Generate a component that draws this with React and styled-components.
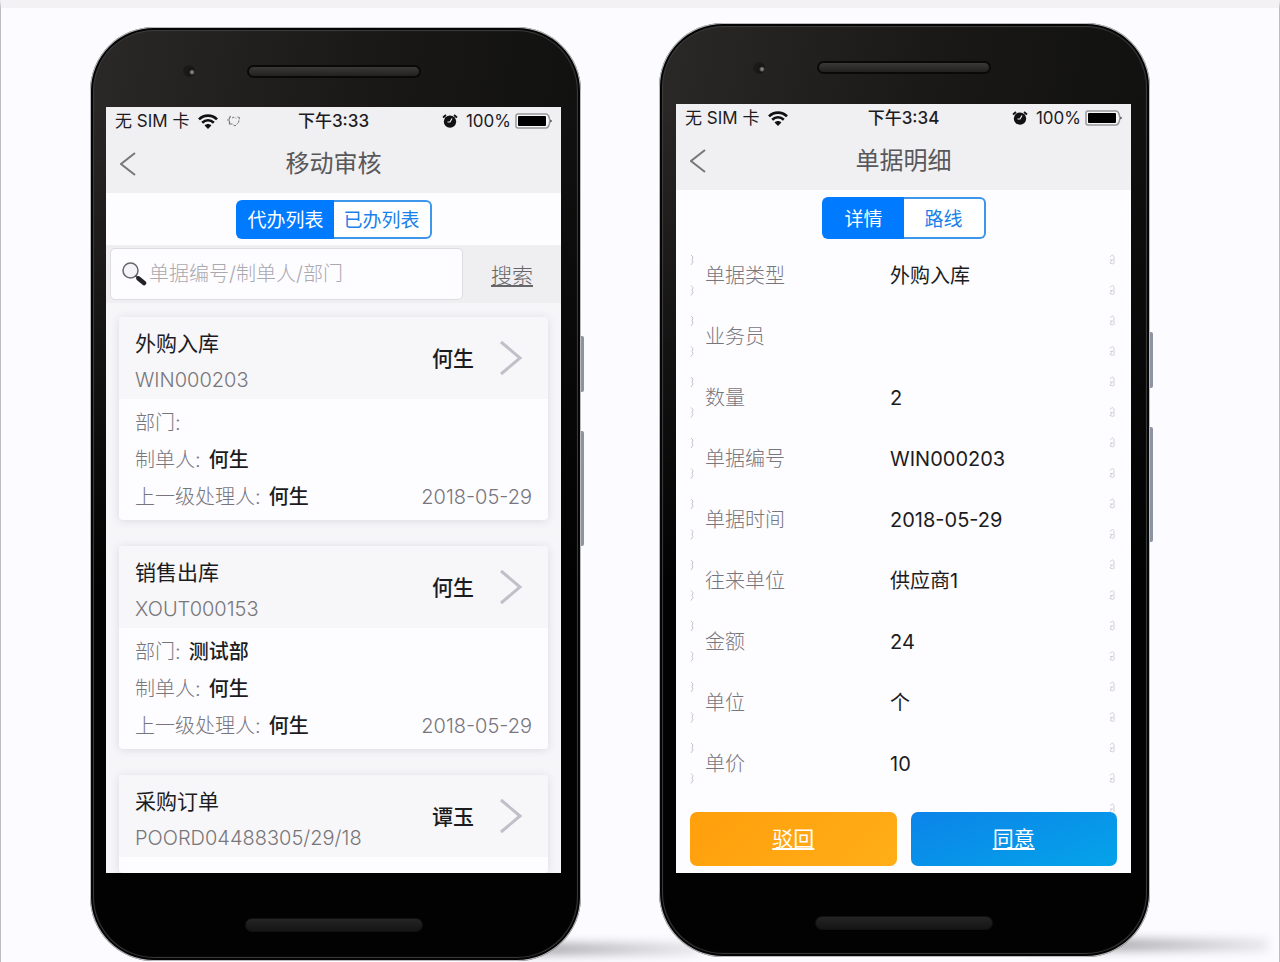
import React, { useState } from "react";
import styled, { createGlobalStyle } from "styled-components";

const GlobalStyle = createGlobalStyle`
  * {
    box-sizing: border-box;
  }

  body {
    margin: 0;
    background: #fcfbff;
    color: #1c1c1e;
    font-family: Inter, "Noto Sans CJK SC", sans-serif;
    font-size: 20px;
  }

  button, input {
    font-family: inherit;
  }
`;

const Page = styled.main`
  display: grid;
  grid-template-columns: repeat(2, minmax(0, 1fr));
  align-items: start;
  gap: 78px;
  min-height: 100vh;
  padding: 15px 129px 0 89px;
  border: 1px solid #bcbcc2;
  border-top: 8px solid #f3f1f4;
  border-bottom: 0;
  overflow: hidden;
`;

const Phone = styled.section`
  position: relative;
  display: flex;
  flex-direction: column;
  margin-top: ${(props) => (props.$lowered ? "4px" : "0")};
  padding: ${(props) => (props.$lowered ? "0 20px 0 16px" : "0 19px 0 17px")};
  border-radius: 64px;
  background: linear-gradient(rgba(0, 0, 0, 0) 80px, #020202 560px),
    linear-gradient(100deg, #2b2928 0%, #191817 45%, #0c0c0c 100%);
  box-shadow: inset 0 0 0 1px #b9bcbd, inset 0 0 0 3px #050505,
    inset 0 0 1px 4px #3d3d3d;

  &::before {
    content: "";
    position: absolute;
    z-index: -1;
    right: -118px;
    bottom: 6px;
    width: 240px;
    height: 12px;
    background: linear-gradient(90deg, #aeaeb2 40%, #e9e8ed);
    filter: blur(5px);
  }
`;

const SideKey = styled.span`
  position: absolute;
  left: 100%;
  top: ${(props) => props.$top};
  width: 3px;
  height: ${(props) => props.$length};
  border-radius: 0 2px 2px 0;
  background: #8d93a3;
`;

const TopBezel = styled.div`
  display: grid;
  grid-template-columns: 1fr 174px 1fr;
  align-items: center;
  height: ${(props) => (props.$lowered ? "80px" : "81px")};
  padding-top: 8px;
`;

const Camera = styled.span`
  width: 12px;
  height: 12px;
  margin-left: 77px;
  border-radius: 50%;
  background: radial-gradient(circle at 75% 60%, #85857d 0 1px, #151413 3px, #1b1a19 6px);
`;

const Speaker = styled.span`
  height: 13px;
  border: 2px solid #090909;
  border-radius: 7px;
  background: linear-gradient(#3a3938, #222120);
`;

const BottomBezel = styled.div`
  display: flex;
  justify-content: center;
  align-items: center;
  height: ${(props) => (props.$lowered ? "88px" : "84px")};
  padding-top: 16px;

  span {
    width: 178px;
    height: 14px;
    border: 1px solid #111;
    border-radius: 7px;
    background: linear-gradient(#232423, #151515);
  }
`;

const Screen = styled.div`
  background: ${(props) => (props.$grey ? "#f6f5f8" : "#fdfcff")};
  overflow: hidden;
`;

const Header = styled.header`
  height: 86px;
  background: #f0eff2;
`;

const StatusBar = styled.div`
  display: grid;
  grid-template-columns: 1fr auto 1fr;
  align-items: center;
  height: 28px;
  padding: 0 9px;
  font-size: 17px;
  line-height: 24px;
`;

const StatusGroup = styled.div`
  display: flex;
  align-items: center;
  justify-content: ${(props) => (props.$end ? "flex-end" : "flex-start")};
  gap: ${(props) => (props.$end ? "4px" : "9px")};
  white-space: nowrap;
`;

const Clock = styled.time`
  font-weight: 500;
`;

const NavBar = styled.div`
  display: grid;
  grid-template-columns: 60px 1fr 60px;
  align-items: center;
  height: 58px;

  h1 {
    margin: 0;
    color: #58585a;
    font-size: 24px;
    font-weight: 400;
    line-height: 32px;
    text-align: center;
  }
`;

const BackButton = styled.button`
  display: flex;
  padding: 0 14px;
  border: 0;
  background: none;
`;

const Tabs = styled.div`
  display: flex;
  justify-content: center;
  padding: 7px 0 6px;
  background: #fdfcff;
`;

const Tab = styled.button`
  min-width: ${(props) => (props.$compact ? "82px" : "98px")};
  height: ${(props) => (props.$compact ? "42px" : "39px")};
  padding: 0 8px 2px;
  border: 2px solid ${(props) => (props.$active ? "#007aff" : "#3d96ea")};
  background: ${(props) => (props.$active ? "#007aff" : "#fff")};
  color: ${(props) => (props.$active ? "#fff" : "#1a80ea")};
  font-size: 19px;

  &:first-child {
    border-right: 0;
    border-radius: 6px 0 0 6px;
  }

  &:last-child {
    border-left: 0;
    border-radius: 0 6px 6px 0;
  }
`;

const SearchBar = styled.form`
  display: grid;
  grid-template-columns: minmax(0, 1fr) 98px;
  align-items: center;
  height: 58px;
  padding-left: 4px;
  background: #efeef1;
`;

const SearchField = styled.label`
  display: flex;
  align-items: center;
  height: 52px;
  padding: 0 10px;
  border: 1px solid #dddce0;
  border-radius: 5px;
  background: #fdfcff;

  input {
    flex: 1;
    min-width: 0;
    padding: 0 2px;
    border: 0;
    outline: 0;
    background: none;
    font-size: 20px;
    font-weight: 300;
  }

  input::placeholder {
    color: #aaa9b0;
  }
`;

const SearchLink = styled.a`
  color: #666568;
  font-size: 21px;
  font-weight: 300;
  text-align: center;
  text-underline-offset: 2px;
`;

const CardList = styled.div`
  display: grid;
  gap: 26px;
  padding: 14px 13px 0;
`;

const Card = styled.article`
  border-radius: 4px;
  background: #fdfcff;
  box-shadow: 0 1px 8px #dcdbe0;
`;

const CardHead = styled.div`
  display: grid;
  grid-template-columns: 1fr auto 24px;
  align-items: center;
  column-gap: 25px;
  height: 82px;
  padding: 0 25px 0 16px;
  border-radius: 4px 4px 0 0;
  background: #f7f6f9;
  line-height: 37px;

  h2 {
    margin: 0;
    font-size: 21px;
    font-weight: 400;
  }

  p {
    margin: 0;
    color: #77767a;
    font-size: 20px;
    font-weight: 300;
  }
`;

const CardTitle = styled.div`
  padding-top: 7px;
`;

const Person = styled.span`
  font-size: 21px;
  font-weight: 500;
`;

const CardBody = styled.div`
  min-height: 16px;
  padding: ${(props) => (props.$empty ? "0" : "6px 16px 4px")};
  line-height: 37px;
`;

const Line = styled.div`
  display: flex;
  gap: 8px;
  color: #77767d;
  font-weight: 300;

  b {
    color: #1c1c1e;
    font-weight: 500;
  }

  time {
    margin-left: auto;
  }
`;

const DetailArea = styled.div`
  display: grid;
  grid-template-columns: 15px 1fr 22px;
  align-items: start;
  padding-left: 14px;
`;

const Details = styled.table`
  width: 100%;
  border-collapse: collapse;
  table-layout: fixed;
  line-height: 28px;

  th, td {
    height: 61px;
    padding: 0;
    text-align: left;
    font-size: 20px;
  }

  th {
    width: 185px;
    color: #77767d;
    font-weight: 300;
  }

  td {
    font-weight: 400;
  }
`;

const EdgeMarks = styled.svg`
  width: 8px;
  height: 567px;
`;

const Actions = styled.div`
  display: grid;
  grid-template-columns: 1fr 1fr;
  gap: 14px;
  padding: 0 14px 7px;
`;

const ActionButton = styled.button`
  height: 54px;
  padding: 0 0 4px;
  border: 0;
  border-radius: 7px;
  background: ${(props) =>
    props.$primary
      ? "linear-gradient(160deg, #0b84e9, #05a3e9)"
      : "linear-gradient(135deg, #ff9f0c, #ffae18)"};
  color: #fff;
  font-size: 21px;
  text-decoration: underline;
  text-underline-offset: 2px;
`;

const WifiIcon = () => (
  <svg width="20" height="15" viewBox="0 0 20 15" fill="none" stroke="#111" strokeWidth="2.6">
    <path d="M1 5.4C6 .4 14 .4 19 5.4" />
    <path d="M4.2 8.7c3.3-3.2 8.3-3.2 11.6 0" />
    <path d="M6.6 11.500c1.8-2 5-2 6.800 0L10 15z" fill="#111" stroke="none" />
  </svg>
);

const LoadingIcon = () => (
  <svg width="13" height="12" viewBox="0 0 13 12" fill="none" stroke="#77777b">
    <path d="M3.500 1L2 4M0 5h3M2.500 6v3h3" strokeWidth="1.2" />
    <path d="M5 3l2-1M8 2.500l1 1M10.500 2l2 .500-1 5-3.500 3.500-2.500-1.500" strokeDasharray="4 1" />
  </svg>
);

const AlarmIcon = () => (
  <svg width="20" height="14" viewBox="0 0 20 14">
    <circle cx="8" cy="7.600" r="6.200" fill="#111" />
    <path d="M1 3.500l3-2.500M15 3.500L12 1" stroke="#111" strokeWidth="1.800" />
    <path d="M10 4.500L8 8H5.500" fill="none" stroke="#f0eff2" strokeWidth="1.200" />
  </svg>
);

const BatteryIcon = () => (
  <svg width="37" height="16" viewBox="0 0 37 16">
    <path
      d="M3 1h28q2 0 3 3l1 4-1 4q-1 3-3 3H3q-2 0-2-2V3q0-2 2-2z"
      fill="#f7f7f8"
      stroke="#98989b"
      strokeWidth="1.500"
    />
    <rect x="3" y="3" width="28" height="10" rx="1" fill="#000" />
    <path d="M35.500 6.500L37 8l-1.500 1.500z" fill="#222" />
  </svg>
);

const BackIcon = () => (
  <svg width="16" height="24" viewBox="0 0 16 24" fill="none" stroke="#77777a" strokeWidth="2">
    <path d="M15 1L1 12l14 11" />
  </svg>
);

const NextIcon = () => (
  <svg width="24" height="36" viewBox="0 0 24 36" fill="none" stroke="#bfc0c8" strokeWidth="3">
    <path d="M2 2l19 16L2 34" />
  </svg>
);

const MagnifierIcon = () => (
  <svg width="26" height="24" viewBox="0 0 26 24">
    <circle cx="9.500" cy="8.500" r="7.500" fill="#f4f4f8" stroke="#66666b" strokeWidth="1.500" />
    <path d="M14.500 13.500l4 4" stroke="#55555a" strokeWidth="2" />
    <path d="M17.500 16.500l5.500 4.500" stroke="#222226" strokeWidth="4.500" strokeLinecap="round" />
  </svg>
);

const markRows = Array.from({ length: 19 }, (_, index) => index);

const LeftMarks = () => (
  <EdgeMarks viewBox="0 0 8 567" fill="none" stroke="#c4c4cc" aria-hidden="true">
    {markRows.slice(0, 18).map((row) => (
      <path key={row} d={`M1 ${10 + row * 30.5}l2 2-1 3 1 2-2 3`} />
    ))}
  </EdgeMarks>
);

const RightMarks = () => (
  <EdgeMarks viewBox="0 0 8 567" fill="none" stroke="#cfcfd7" aria-hidden="true">
    {markRows.map((row) => (
      <path
        key={row}
        d={`M1 ${12 + row * 30.5}q3-4 4 0v7M1 ${15 + row * 30.5}h3M3 ${15 + row * 30.5}l-2 3 3 1`}
      />
    ))}
  </EdgeMarks>
);

const PhoneFrame = ({ lowered, children }) => (
  <Phone $lowered={lowered}>
    <SideKey $top="309px" $length="56px" />
    <SideKey $top="404px" $length="115px" />
    <TopBezel $lowered={lowered}>
      <Camera />
      <Speaker />
    </TopBezel>
    {children}
    <BottomBezel $lowered={lowered}>
      <span />
    </BottomBezel>
  </Phone>
);

const ScreenHeader = ({ time, title, loading }) => (
  <Header>
    <StatusBar>
      <StatusGroup>
        <span>无 SIM 卡</span>
        <WifiIcon />
        {loading && <LoadingIcon />}
      </StatusGroup>
      <Clock>{time}</Clock>
      <StatusGroup $end>
        <AlarmIcon />
        <span>100%</span>
        <BatteryIcon />
      </StatusGroup>
    </StatusBar>
    <NavBar>
      <BackButton type="button" aria-label="返回">
        <BackIcon />
      </BackButton>
      <h1>{title}</h1>
    </NavBar>
  </Header>
);

const TabSwitch = ({ labels, compact }) => {
  const [active, setActive] = useState(0);

  return (
    <Tabs>
      {labels.map((label, index) => (
        <Tab
          key={label}
          type="button"
          $compact={compact}
          $active={index === active}
          onClick={() => setActive(index)}
        >
          {label}
        </Tab>
      ))}
    </Tabs>
  );
};

const orders = [
  { title: "外购入库", code: "WIN000203", person: "何生", department: "", date: "2018-05-29" },
  { title: "销售出库", code: "XOUT000153", person: "何生", department: "测试部", date: "2018-05-29" },
  { title: "采购订单", code: "POORD04488305/29/18", person: "谭玉" },
];

const details = [
  ["单据类型", "外购入库"],
  ["业务员", ""],
  ["数量", "2"],
  ["单据编号", "WIN000203"],
  ["单据时间", "2018-05-29"],
  ["往来单位", "供应商1"],
  ["金额", "24"],
  ["单位", "个"],
  ["单价", "10"],
];

const OrderCard = ({ order }) => (
  <Card>
    <CardHead>
      <CardTitle>
        <h2>{order.title}</h2>
        <p>{order.code}</p>
      </CardTitle>
      <Person>{order.person}</Person>
      <NextIcon />
    </CardHead>
    <CardBody $empty={!order.date}>
      {order.date && (
        <>
          <Line>
            部门: <b>{order.department}</b>
          </Line>
          <Line>
            制单人: <b>{order.person}</b>
          </Line>
          <Line>
            上一级处理人: <b>{order.person}</b>
            <time>{order.date}</time>
          </Line>
        </>
      )}
    </CardBody>
  </Card>
);

const OrderListScreen = () => {
  const [keyword, setKeyword] = useState("");

  return (
    <Screen $grey>
      <ScreenHeader time="下午3:33" title="移动审核" loading />
      <TabSwitch labels={["代办列表", "已办列表"]} />
      <SearchBar onSubmit={(event) => event.preventDefault()}>
        <SearchField>
          <MagnifierIcon />
          <input
            type="text"
            aria-label="搜索单据"
            placeholder="单据编号/制单人/部门"
            value={keyword}
            onChange={(event) => setKeyword(event.target.value)}
          />
        </SearchField>
        <SearchLink href="#search">搜索</SearchLink>
      </SearchBar>
      <CardList>
        {orders.map((order) => (
          <OrderCard key={order.code} order={order} />
        ))}
      </CardList>
    </Screen>
  );
};

const OrderDetailScreen = () => (
  <Screen>
    <ScreenHeader time="下午3:34" title="单据明细" />
    <TabSwitch labels={["详情", "路线"]} compact />
    <DetailArea>
      <LeftMarks />
      <Details>
        <tbody>
          {details.map(([label, value]) => (
            <tr key={label}>
              <th scope="row">{label}</th>
              <td>{value}</td>
            </tr>
          ))}
        </tbody>
      </Details>
      <RightMarks />
    </DetailArea>
    <Actions>
      <ActionButton type="button">驳回</ActionButton>
      <ActionButton type="button" $primary>
        同意
      </ActionButton>
    </Actions>
  </Screen>
);

const App = () => (
  <>
    <GlobalStyle />
    <Page>
      <PhoneFrame lowered>
        <OrderListScreen />
      </PhoneFrame>
      <PhoneFrame>
        <OrderDetailScreen />
      </PhoneFrame>
    </Page>
  </>
);

export default App;
